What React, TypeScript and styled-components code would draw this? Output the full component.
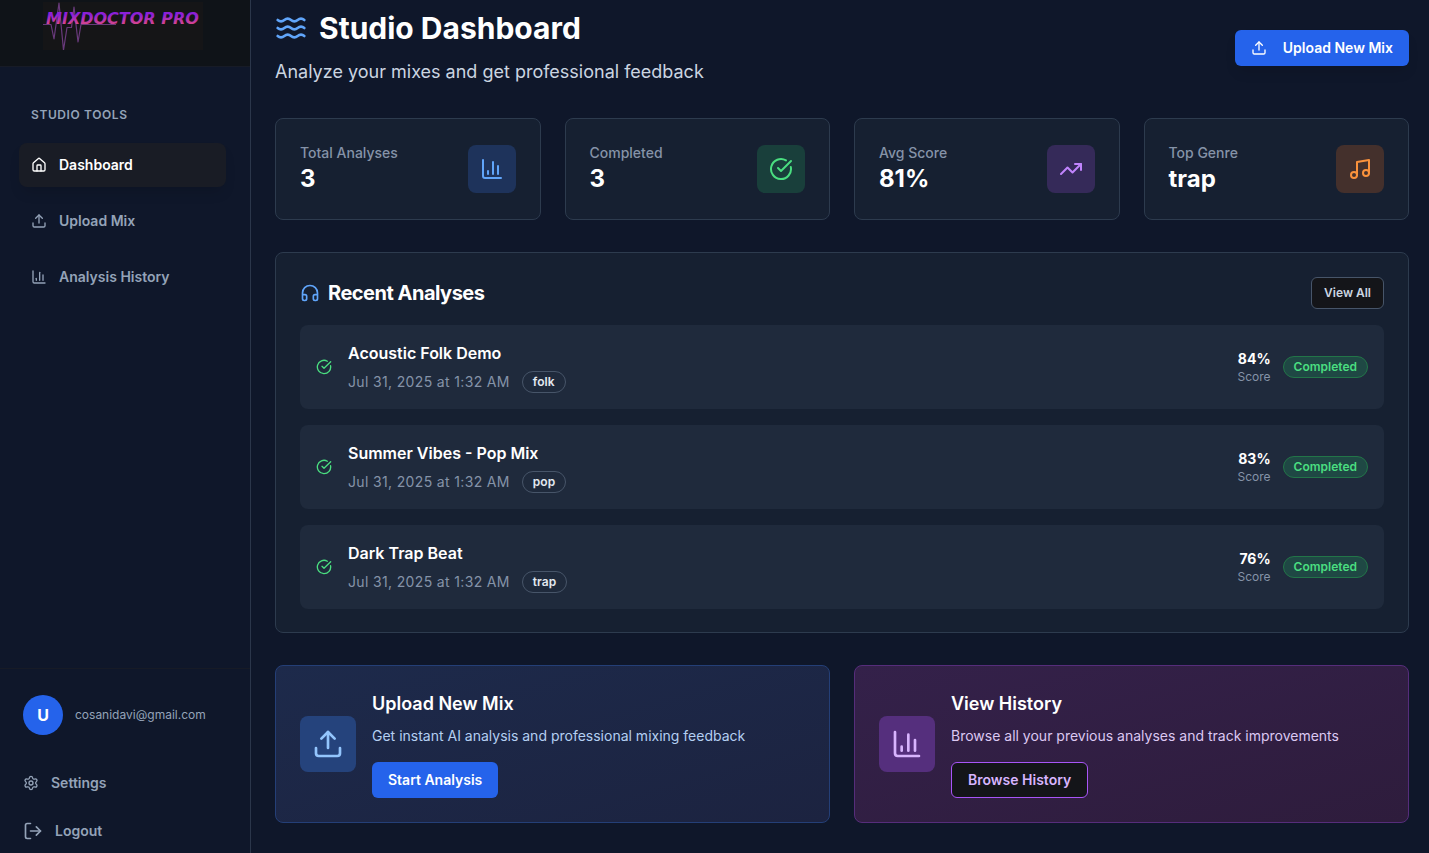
import React from "react";
import styled, { createGlobalStyle } from "styled-components";
import {
  ChartColumn,
  CircleCheckBig,
  Headphones,
  House,
  LogOut,
  Music,
  Settings,
  TrendingUp,
  Upload,
  Waves,
} from "lucide-react";

const GlobalStyle = createGlobalStyle`
  *, *::before, *::after { box-sizing: border-box; }
  body {
    margin: 0;
    background: #0f172a;
    color: #fff;
    font-family: Inter, "Liberation Sans", sans-serif;
    font-size: 14px;
    line-height: 20px;
  }
  h1, h2, h3, p, ul, dl, dd { margin: 0; padding: 0; }
  ul { list-style: none; }
  a { color: inherit; text-decoration: none; }
  button { font-family: inherit; line-height: 20px; cursor: pointer; }
  svg { flex-shrink: 0; }
`;

const Shell = styled.div`
  display: flex;
  min-height: 100vh;
`;

const Sidebar = styled.aside`
  display: flex;
  flex-direction: column;
  flex: 0 0 251px;
  border-right: 1px solid #2b364a;
  background: #0f172a;
`;

const Brand = styled.a`
  display: flex;
  justify-content: center;
  padding: 2px 4px 16px 0;
  background: #0f1318;
  border-bottom: 1px solid #171b26;
`;

const Nav = styled.nav`
  display: flex;
  flex-direction: column;
  gap: 18px;
  padding: 38px 24px 0 19px;
`;

const NavHeading = styled.h2`
  padding: 0 12px;
  font-size: 12px;
  line-height: 20px;
  font-weight: 600;
  letter-spacing: 0.05em;
  text-transform: uppercase;
  color: #94a3b8;
`;

const NavList = styled.ul`
  display: flex;
  flex-direction: column;
  gap: 12px;
`;

const NavLink = styled.a<{ $active?: boolean }>`
  display: flex;
  align-items: center;
  gap: 12px;
  height: 44px;
  padding: 0 12px;
  border-radius: 8px;
  font-weight: 600;
  color: ${(p) => (p.$active ? "#fff" : "#94a3b8")};
  background: ${(p) => (p.$active ? "#191c25" : "transparent")};
  box-shadow: ${(p) => (p.$active ? "0 8px 14px -4px rgba(0, 0, 0, 0.15)" : "none")};
`;

const SidebarFooter = styled.div`
  display: flex;
  flex-direction: column;
  gap: 26px;
  margin-top: auto;
  padding: 26px 23px 0;
  border-top: 1px solid #171b26;
`;

const Account = styled.div`
  display: flex;
  align-items: center;
  gap: 12px;
  font-size: 12px;
  color: #94a3b8;
`;

const Avatar = styled.span`
  display: grid;
  place-items: center;
  width: 40px;
  height: 40px;
  border-radius: 50%;
  background: #2563eb;
  color: #fff;
  font-size: 16px;
  font-weight: 700;
`;

const FooterMenu = styled.div`
  display: flex;
  flex-direction: column;
  gap: 4px;
`;

const FooterAction = styled.button`
  display: flex;
  align-items: center;
  gap: 12px;
  height: 44px;
  padding: 0;
  border: 0;
  background: none;
  color: #94a3b8;
  font-size: 14px;
  font-weight: 600;
`;

const Main = styled.main`
  display: flex;
  flex-direction: column;
  flex: 1;
  gap: 32px;
  min-width: 0;
  padding: 10px 20px 30px 24px;
`;

const PageHeader = styled.header`
  display: flex;
  align-items: center;
  justify-content: space-between;
`;

const PageTitle = styled.h1`
  display: flex;
  align-items: center;
  gap: 12px;
  margin-bottom: 12px;
  font-size: 30px;
  line-height: 36px;
  font-weight: 700;
  svg { color: #60a5fa; }
`;

const Subtitle = styled.p`
  font-size: 18px;
  line-height: 28px;
  color: #cbd5e1;
`;

const PrimaryButton = styled.button<{ $raised?: boolean }>`
  display: inline-flex;
  align-items: center;
  gap: 16px;
  height: 36px;
  padding: 0 16px;
  border: 0;
  border-radius: 6px;
  background: #2563eb;
  color: #fff;
  font-size: 14px;
  font-weight: 600;
  box-shadow: ${(p) => (p.$raised ? "0 8px 14px -4px rgba(0, 0, 0, 0.15)" : "none")};
`;

const OutlineButton = styled.button<{ $accent?: boolean }>`
  display: inline-flex;
  align-items: center;
  height: ${(p) => (p.$accent ? 36 : 32)}px;
  padding: 0 ${(p) => (p.$accent ? 16 : 12)}px;
  border: 1px solid ${(p) => (p.$accent ? "#a855f7" : "#475569")};
  border-radius: 6px;
  background: #141519;
  color: ${(p) => (p.$accent ? "#d8b4fe" : "#cbd5e1")};
  font-size: ${(p) => (p.$accent ? 14 : 12)}px;
  font-weight: 600;
`;

const StatGrid = styled.section`
  display: grid;
  grid-template-columns: repeat(4, 1fr);
  gap: 24px;
`;

const StatCard = styled.dl`
  display: flex;
  align-items: center;
  justify-content: space-between;
  padding: 24px;
  border: 1px solid #2d3b4e;
  border-radius: 8px;
  background: #162031;
`;

const StatLabel = styled.dt`
  font-weight: 500;
  color: #8593a8;
`;

const StatValue = styled.dd`
  font-size: 24px;
  line-height: 32px;
  font-weight: 700;
`;

const IconTile = styled.span<{ $bg: string; $fg: string; $large?: boolean }>`
  display: grid;
  place-items: center;
  flex-shrink: 0;
  width: ${(p) => (p.$large ? 56 : 48)}px;
  height: ${(p) => (p.$large ? 56 : 48)}px;
  border-radius: 8px;
  background: ${(p) => p.$bg};
  color: ${(p) => p.$fg};
`;

const Panel = styled.section`
  padding: 24px 24px 23px;
  border: 1px solid #2d3b4e;
  border-radius: 8px;
  background: #162031;
`;

const PanelHeader = styled.div`
  display: flex;
  align-items: center;
  justify-content: space-between;
  margin-bottom: 16px;
`;

const PanelTitle = styled.h2`
  display: flex;
  align-items: center;
  gap: 8px;
  font-size: 20px;
  line-height: 28px;
  font-weight: 700;
  letter-spacing: -0.025em;
  svg { color: #60a5fa; }
`;

const AnalysisList = styled.ul`
  display: flex;
  flex-direction: column;
  gap: 16px;
`;

const AnalysisRow = styled.li`
  display: flex;
  align-items: center;
  gap: 16px;
  padding: 16px;
  border-radius: 8px;
  background: #1f2a3c;
  > svg { color: #4ade80; }
`;

const AnalysisInfo = styled.div`
  display: flex;
  flex-direction: column;
  flex: 1;
  gap: 6px;
`;

const AnalysisName = styled.h3`
  font-size: 16px;
  line-height: 24px;
  font-weight: 600;
`;

const AnalysisMeta = styled.div`
  display: flex;
  align-items: center;
  gap: 12px;
  color: #8593a8;
  time { letter-spacing: 0.025em; }
`;

const Badge = styled.span<{ $done?: boolean }>`
  padding: 2px 10px;
  border: 1px solid ${(p) => (p.$done ? "#227548" : "#475569")};
  border-radius: 11px;
  background: ${(p) => (p.$done ? "#1f4844" : "transparent")};
  color: ${(p) => (p.$done ? "#4ade80" : "#e2e8f0")};
  font-size: 12px;
  line-height: 16px;
  font-weight: 600;
`;

const AnalysisResult = styled.div`
  display: flex;
  align-items: center;
  gap: 12px;
`;

const Score = styled.div`
  text-align: right;
  font-size: 12px;
  line-height: 16px;
  color: #8593a8;
  strong {
    display: block;
    font-size: 14px;
    line-height: 20px;
    font-weight: 700;
    color: #fff;
  }
`;

const ActionGrid = styled.section`
  display: grid;
  grid-template-columns: repeat(2, 1fr);
  gap: 24px;
`;

const ActionCard = styled.article<{ $tone: "blue" | "purple" }>`
  display: flex;
  align-items: center;
  gap: 16px;
  padding: 24px;
  border: 1px solid ${(p) => (p.$tone === "blue" ? "#243f77" : "#562d7b")};
  border-radius: 8px;
  background: ${(p) =>
    p.$tone === "blue"
      ? "linear-gradient(to bottom right, #1d2a4b, #1c2340)"
      : "linear-gradient(to bottom right, #34214a, #2e1c3c)"};
`;

const ActionTitle = styled.h3`
  margin-bottom: 8px;
  font-size: 18px;
  line-height: 28px;
  font-weight: 600;
`;

const ActionText = styled.p<{ $color: string }>`
  margin-bottom: 16px;
  color: ${(p) => p.$color};
`;

const navItems = [
  { label: "Dashboard", Icon: House, active: true },
  { label: "Upload Mix", Icon: Upload, active: false },
  { label: "Analysis History", Icon: ChartColumn, active: false },
];

const stats = [
  { label: "Total Analyses", value: "3", Icon: ChartColumn, bg: "#1e335b", fg: "#60a5fa" },
  { label: "Completed", value: "3", Icon: CircleCheckBig, bg: "#193f3b", fg: "#4ade80" },
  { label: "Avg Score", value: "81%", Icon: TrendingUp, bg: "#352a59", fg: "#c084fc" },
  { label: "Top Genre", value: "trap", Icon: Music, bg: "#44302c", fg: "#fb923c" },
];

const analyses = [
  { name: "Acoustic Folk Demo", date: "Jul 31, 2025 at 1:32 AM", genre: "folk", score: "84%" },
  { name: "Summer Vibes - Pop Mix", date: "Jul 31, 2025 at 1:32 AM", genre: "pop", score: "83%" },
  { name: "Dark Trap Beat", date: "Jul 31, 2025 at 1:32 AM", genre: "trap", score: "76%" },
];

function Logo() {
  return (
    <svg width="160" height="48" viewBox="0 0 160 48" role="img" aria-label="MixDoctor Pro">
      <defs>
        <linearGradient id="brand" x1="0" y1="0" x2="0" y2="1">
          <stop offset="0.3" stopColor="#8b20d8" />
          <stop offset="0.8" stopColor="#d8468c" />
        </linearGradient>
      </defs>
      <rect width="160" height="48" fill="#151517" />
      <path
        d="M0 22.500H8L11 37L16 1L20.500 48L24 25.500H28.500L31 5L35 40L38 22.500H73"
        fill="none"
        stroke="#693a7c"
        strokeWidth="1.200"
        strokeLinejoin="round"
      />
      <text
        x="3"
        y="22"
        fill="url(#brand)"
        fontFamily="'DejaVu Sans', sans-serif"
        fontSize="16"
        fontWeight="700"
        fontStyle="italic"
      >
        MIXDOCTOR PRO
      </text>
    </svg>
  );
}

export default function App() {
  return (
    <>
      <GlobalStyle />
      <Shell>
        <Sidebar>
          <Brand href="#">
            <Logo />
          </Brand>
          <Nav>
            <NavHeading>Studio Tools</NavHeading>
            <NavList>
              {navItems.map(({ label, Icon, active }) => (
                <li key={label}>
                  <NavLink href="#" $active={active}>
                    <Icon size={16} />
                    {label}
                  </NavLink>
                </li>
              ))}
            </NavList>
          </Nav>
          <SidebarFooter>
            <Account>
              <Avatar>U</Avatar>
              cosanidavi@gmail.com
            </Account>
            <FooterMenu>
              <FooterAction>
                <Settings size={16} />
                Settings
              </FooterAction>
              <FooterAction>
                <LogOut size={20} />
                Logout
              </FooterAction>
            </FooterMenu>
          </SidebarFooter>
        </Sidebar>
        <Main>
          <PageHeader>
            <div>
              <PageTitle>
                <Waves size={32} />
                Studio Dashboard
              </PageTitle>
              <Subtitle>Analyze your mixes and get professional feedback</Subtitle>
            </div>
            <PrimaryButton $raised>
              <Upload size={16} />
              Upload New Mix
            </PrimaryButton>
          </PageHeader>
          <StatGrid>
            {stats.map(({ label, value, Icon, bg, fg }) => (
              <StatCard key={label}>
                <div>
                  <StatLabel>{label}</StatLabel>
                  <StatValue>{value}</StatValue>
                </div>
                <IconTile $bg={bg} $fg={fg}>
                  <Icon size={24} />
                </IconTile>
              </StatCard>
            ))}
          </StatGrid>
          <Panel>
            <PanelHeader>
              <PanelTitle>
                <Headphones size={20} />
                Recent Analyses
              </PanelTitle>
              <OutlineButton>View All</OutlineButton>
            </PanelHeader>
            <AnalysisList>
              {analyses.map((a) => (
                <AnalysisRow key={a.name}>
                  <CircleCheckBig size={16} />
                  <AnalysisInfo>
                    <AnalysisName>{a.name}</AnalysisName>
                    <AnalysisMeta>
                      <time dateTime="2025-07-31T01:32">{a.date}</time>
                      <Badge>{a.genre}</Badge>
                    </AnalysisMeta>
                  </AnalysisInfo>
                  <AnalysisResult>
                    <Score>
                      <strong>{a.score}</strong>
                      Score
                    </Score>
                    <Badge $done>Completed</Badge>
                  </AnalysisResult>
                </AnalysisRow>
              ))}
            </AnalysisList>
          </Panel>
          <ActionGrid>
            <ActionCard $tone="blue">
              <IconTile $large $bg="#25437c" $fg="#93c5fd">
                <Upload size={32} />
              </IconTile>
              <div>
                <ActionTitle>Upload New Mix</ActionTitle>
                <ActionText $color="#b4cff2">
                  Get instant AI analysis and professional mixing feedback
                </ActionText>
                <PrimaryButton>Start Analysis</PrimaryButton>
              </div>
            </ActionCard>
            <ActionCard $tone="purple">
              <IconTile $large $bg="#552f7d" $fg="#d8b4fe">
                <ChartColumn size={32} />
              </IconTile>
              <div>
                <ActionTitle>View History</ActionTitle>
                <ActionText $color="#dcc8f2">
                  Browse all your previous analyses and track improvements
                </ActionText>
                <OutlineButton $accent>Browse History</OutlineButton>
              </div>
            </ActionCard>
          </ActionGrid>
        </Main>
      </Shell>
    </>
  );
}
